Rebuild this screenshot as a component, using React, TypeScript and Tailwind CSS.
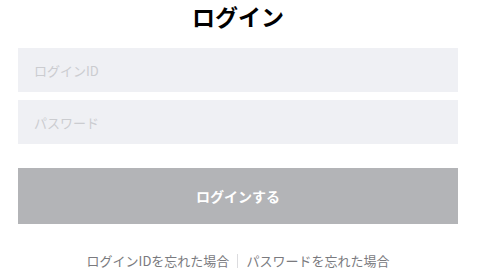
const font = { fontFamily: '"Noto Sans CJK JP", "Noto Sans", sans-serif' };

export default function App() {
  return (
    <div
      className="w-[480px] h-[280px] bg-white pl-[18px] pr-[22px] overflow-hidden"
      style={font}
    >
      <h1 className="text-center text-[23px] font-bold leading-[33px] text-black">
        ログイン
      </h1>
      <form className="mt-[15px] flex flex-col gap-2" onSubmit={(e) => e.preventDefault()}>
        <input
          type="text"
          placeholder="ログインID"
          className="h-[44px] w-full bg-[#eff0f4] px-4 text-[13px] text-gray-800 placeholder:text-[#cbccd0] outline-none"
        />
        <input
          type="password"
          placeholder="パスワード"
          className="h-[44px] w-full bg-[#eff0f4] px-4 text-[13px] text-gray-800 placeholder:text-[#cbccd0] outline-none"
        />
        <button
          type="submit"
          className="mt-4 h-[56px] w-full bg-[#b3b4b7] text-[14px] font-bold text-white"
        >
          ログインする
        </button>
      </form>
      <div className="mt-[27px] flex items-center justify-center text-[13px] leading-5 text-[#7a7a7e]">
        <a href="#">ログインIDを忘れた場合</a>
        <span className="mx-[8px] h-[14px] w-px bg-[#dcdcdf]" />
        <a href="#">パスワードを忘れた場合</a>
      </div>
    </div>
  );
}
